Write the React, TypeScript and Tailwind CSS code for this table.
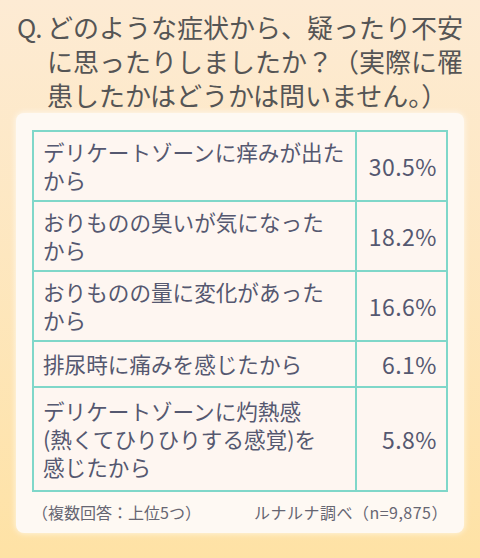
import React from 'react';

const rows = [
  { label: ['デリケートゾーンに痒みが出た', 'から'], value: '30.5%', h: 'h-[70px]' },
  { label: ['おりものの臭いが気になった', 'から'], value: '18.2%', h: 'h-[70px]' },
  { label: ['おりものの量に変化があった', 'から'], value: '16.6%', h: 'h-[70px]' },
  { label: ['排尿時に痛みを感じたから'], value: '6.1%', h: 'h-[46px]' },
  {
    label: ['デリケートゾーンに灼熱感', '(熱くてひりひりする感覚)を', '感じたから'],
    value: '5.8%',
    h: 'h-[104px]',
  },
];

const App: React.FC = () => {
  return (
    <div
      className="w-[480px] h-[558px] overflow-hidden bg-gradient-to-b from-[#fdebd4] to-[#fee2a5] pt-[10px] text-[#58586a]"
      style={{ fontFamily: '"Noto Sans CJK JP", "Noto Sans", sans-serif' }}
    >
      {/* question */}
      <div className="flex pl-[17px] text-[26px] leading-[34px] text-[#555555] whitespace-nowrap">
        <span className="w-[30px] tracking-[-1px]">Q.</span>
        <p>
          どのような症状から、疑ったり不安
          <br />
          に思ったりしましたか？（実際に罹
          <br />
          患したかはどうかは問いません。）
        </p>
      </div>

      {/* card */}
      <div className="mx-[16px] mt-[1px] rounded-[8px] bg-[#fef9f3] px-[16px] pt-[17px] pb-[10px] shadow-[0_0_6px_rgba(255,255,255,0.8)]">
        <table className="w-full border-collapse border-2 border-[#7fd7c9]">
          <tbody>
            {rows.map((r) => (
              <tr key={r.value} className={r.h}>
                <td className="border-2 border-[#7fd7c9] bg-[#fef6f1] pl-[9px] align-middle text-[21.6px] leading-[28px] text-[#555870]">
                  {r.label.map((l, i) => (
                    <div key={i}>{l}</div>
                  ))}
                </td>
                <td className="w-[91px] border-2 border-[#7fd7c9] bg-[#fef6f1] pr-[9px] text-right align-middle text-[23px] tracking-[0.5px] text-[#555870]">
                  {r.value}
                </td>
              </tr>
            ))}
          </tbody>
        </table>

        <div className="mt-[9px] flex justify-between text-[16px] leading-[22px] text-[#666672]">
          <span>（複数回答：上位5つ）</span>
          <span className="tracking-[0.5px]">ルナルナ調べ（n=9,875）</span>
        </div>
      </div>
    </div>
  );
};

export default App;
